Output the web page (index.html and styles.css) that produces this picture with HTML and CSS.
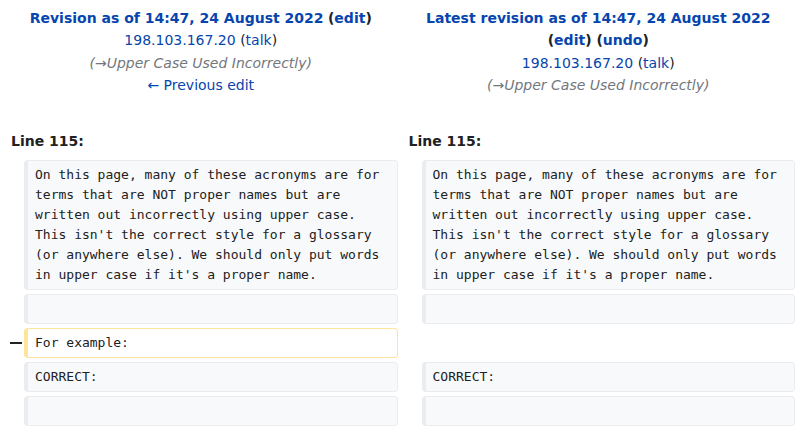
FILE: index.html
```html
<!DOCTYPE html>
<html lang="en">
<head>
<meta charset="utf-8">
<title>Diff</title>
<link rel="stylesheet" href="styles.css">
</head>
<body>
<table class="diff">
  <colgroup>
    <col class="col-marker">
    <col class="col-content">
    <col class="col-marker">
    <col class="col-content">
  </colgroup>
  <tr class="diff-title">
    <td colspan="2" class="diff-otitle">
      <div><a class="title-link" href="#">Revision as of 14:47, 24 August 2022</a> <span class="bold">(<a href="#">edit</a>)</span></div>
      <div><a href="#">198.103.167.20</a> (<a href="#">talk</a>)</div>
      <div class="summary">(<a class="auto" href="#">→</a>Upper Case Used Incorrectly)</div>
      <div><a href="#">← Previous edit</a></div>
    </td>
    <td colspan="2" class="diff-ntitle">
      <div><a class="title-link" href="#">Latest revision as of 14:47, 24 August 2022</a></div>
      <div><span class="bold">(<a href="#">edit</a>) (<a href="#">undo</a>)</span></div>
      <div><a href="#">198.103.167.20</a> (<a href="#">talk</a>)</div>
      <div class="summary">(<a class="auto" href="#">→</a>Upper Case Used Incorrectly)</div>
    </td>
  </tr>
  <tr>
    <td colspan="2" class="diff-lineno">Line 115:</td>
    <td colspan="2" class="diff-lineno">Line 115:</td>
  </tr>
  <tr>
    <td class="diff-marker"></td>
    <td class="diff-context"><div>On this page, many of these acronyms are for terms that are NOT proper names but are written out incorrectly using upper case. This isn't the correct style for a glossary (or anywhere else). We should only put words in upper case if it's a proper name.</div></td>
    <td class="diff-marker"></td>
    <td class="diff-context"><div>On this page, many of these acronyms are for terms that are NOT proper names but are written out incorrectly using upper case. This isn't the correct style for a glossary (or anywhere else). We should only put words in upper case if it's a proper name.</div></td>
  </tr>
  <tr>
    <td class="diff-marker"></td>
    <td class="diff-context"><div><br></div></td>
    <td class="diff-marker"></td>
    <td class="diff-context"><div><br></div></td>
  </tr>
  <tr>
    <td class="diff-marker"><span class="minus"></span></td>
    <td class="diff-deletedline"><div>For example:</div></td>
    <td colspan="2" class="diff-empty"></td>
  </tr>
  <tr>
    <td class="diff-marker"></td>
    <td class="diff-context"><div>CORRECT:</div></td>
    <td class="diff-marker"></td>
    <td class="diff-context"><div>CORRECT:</div></td>
  </tr>
  <tr>
    <td class="diff-marker"></td>
    <td class="diff-context"><div><br></div></td>
    <td class="diff-marker"></td>
    <td class="diff-context"><div><br></div></td>
  </tr>
</table>
</body>
</html>
```
FILE: styles.css
```css
html, body {
  margin: 0;
  padding: 0;
  background: #ffffff;
}
body {
  font-family: "DejaVu Sans", sans-serif;
  font-size: 14px;
  color: #202122;
}
a {
  color: #0645ad;
  text-decoration: none;
}
.diff {
  width: 799px;
  table-layout: fixed;
  border-collapse: separate;
  border-spacing: 4px;
}
.col-marker {
  width: 16px;
}
.diff-otitle,
.diff-ntitle {
  text-align: center;
  vertical-align: top;
  line-height: 22.4px;
  padding: 3px 0 3px 0;
}
.title-link,
.bold {
  font-weight: bold;
}
.summary {
  font-style: italic;
  color: #72777d;
}
.summary .auto {
  color: #72777d;
}
.diff-lineno {
  font-weight: bold;
  line-height: 22px;
  padding: 26px 0 4px 7px;
}
.diff-marker {
  padding: 0;
  vertical-align: middle;
}
.minus {
  display: block;
  width: 12px;
  height: 2px;
  margin-left: 6px;
  background: #202122;
}
.diff-context,
.diff-deletedline {
  font-family: "DejaVu Sans Mono", monospace;
  font-size: 13px;
  line-height: 20px;
  vertical-align: top;
  border-style: solid;
  border-width: 1px 1px 1px 4px;
  border-radius: 4px;
  padding: 0;
  white-space: pre-wrap;
  overflow-wrap: break-word;
}
.diff-context div,
.diff-deletedline div {
  padding: 4px 7px;
}
.diff-context {
  background: #f8f9fa;
  border-color: #eaecf0;
  color: #202122;
}
.diff-deletedline {
  background: #ffffff;
  border-color: #ffe49c;
}
.diff-empty {
  padding: 0;
}
```
